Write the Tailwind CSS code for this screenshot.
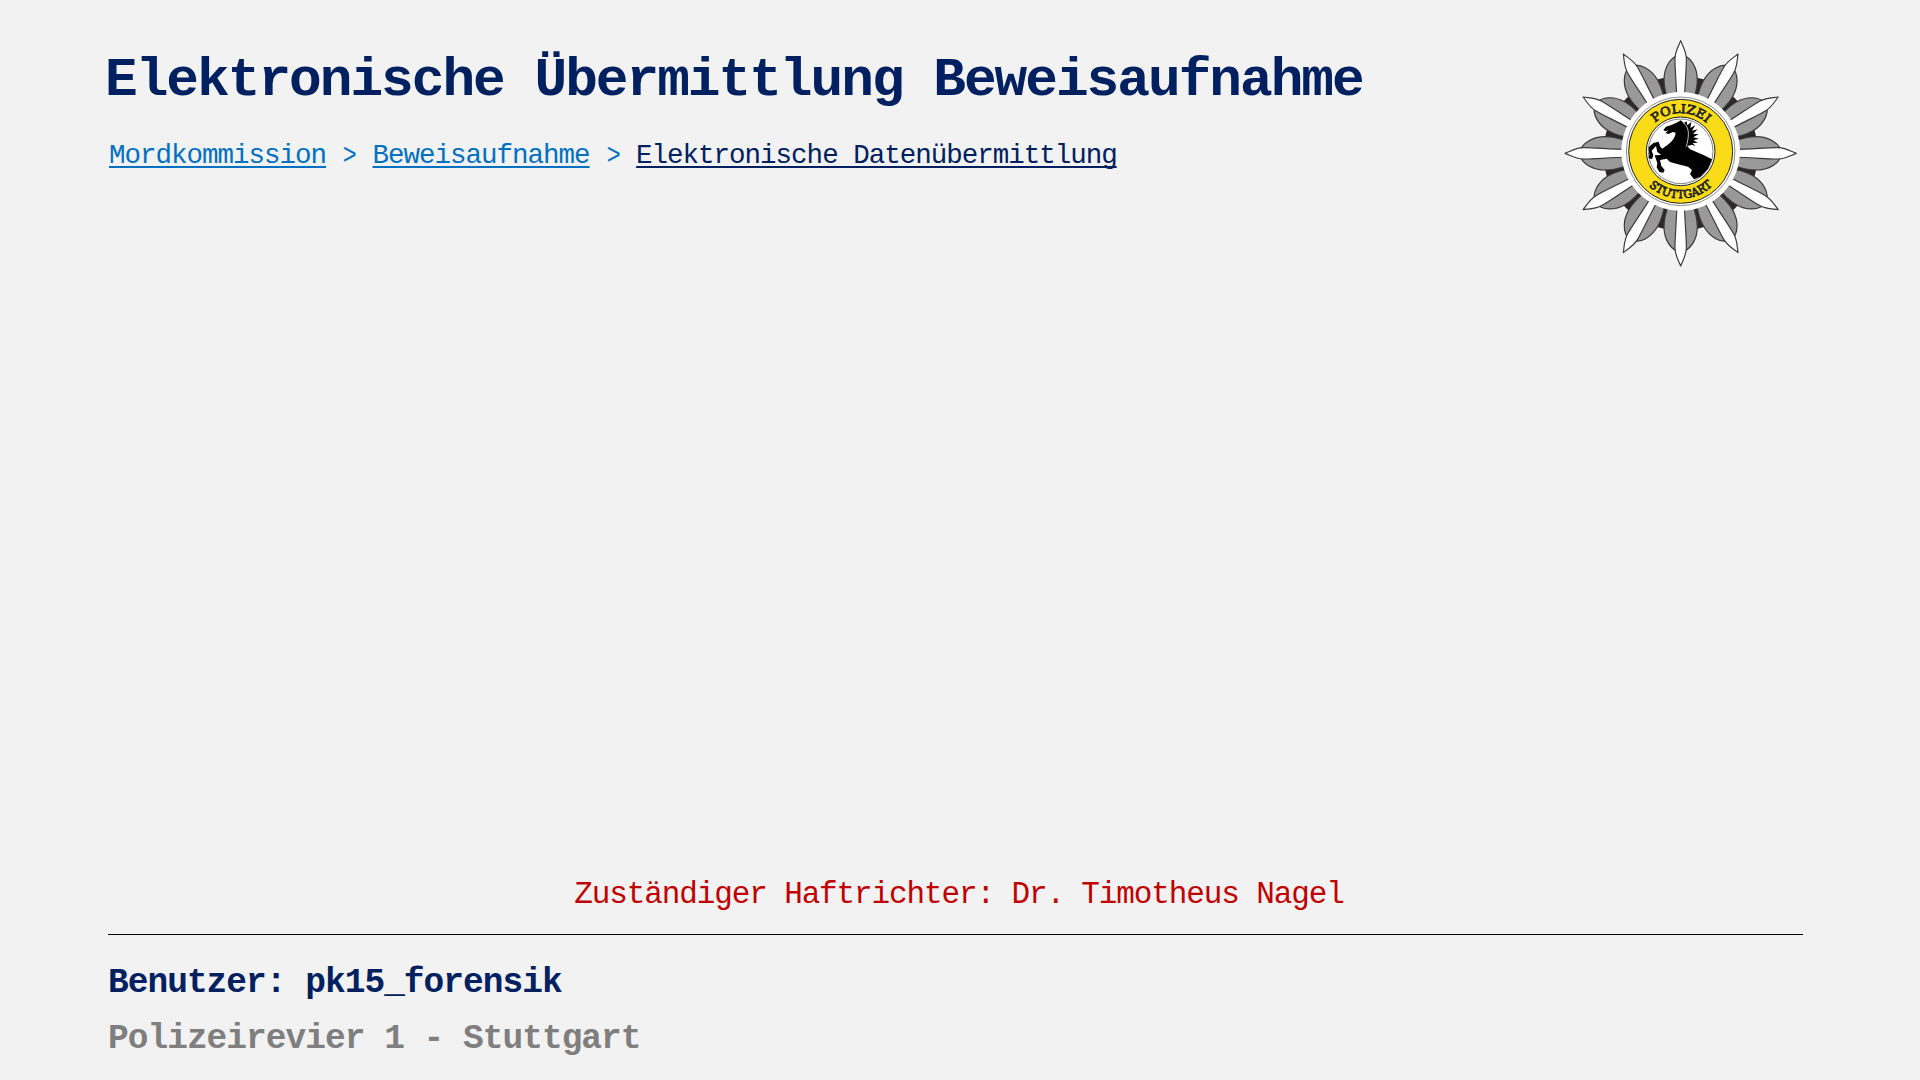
<!DOCTYPE html>
<html lang="de">
<head>
<meta charset="utf-8">
<title>Elektronische Übermittlung Beweisaufnahme</title>
<script src="https://cdn.jsdelivr.net/npm/@tailwindcss/browser@4"></script>
</head>
<body class="bg-[#f2f2f2]">
<div class="flex h-[1080px] w-[1920px] flex-col justify-between overflow-hidden bg-[#f2f2f2] font-['Liberation_Mono',monospace] text-[#002060]">
  <header class="flex justify-between pt-[30px] pr-[110px] pl-[105px]">
    <div class="flex flex-col whitespace-nowrap">
      <h1 class="mt-[17px] text-[54.5px] leading-[68px] font-bold tracking-[-2.03px]">Elektronische Übermittlung Beweisaufnahme</h1>
      <nav class="mt-[23px] ml-[4px] flex text-[27.5px] leading-[36px] tracking-[-1px] text-[#0070c0]">
        <a class="underline decoration-2 underline-offset-[3px] [text-decoration-skip-ink:none]">Mordkommission</a>
        <span class="inline-block w-[46.5px] scale-x-85 scale-y-110 text-center">&gt;</span>
        <a class="underline decoration-2 underline-offset-[3px] [text-decoration-skip-ink:none]">Beweisaufnahme</a>
        <span class="inline-block w-[46.5px] scale-x-85 scale-y-110 text-center">&gt;</span>
        <a class="text-[#002060] underline decoration-2 underline-offset-[3px] [text-decoration-skip-ink:none]">Elektronische Datenübermittlung</a>
      </nav>
    </div>
    <svg class="h-[246px] w-[260px]" viewBox="0 0 780 738">
      <defs>
        <g id="ray" stroke="#3a3839" stroke-width="3.5" stroke-linejoin="round">
          <path fill="#999" d="M0-297C-32-290-50-256-50-220C-50-198-44-175-34-150H34C44-175 50-198 50-220C50-256 32-290 0-297Z"/>
          <path fill="#fff" d="M0-338C-6-322-16-308-17-285C-18-262-13-215-11-150H11C13-215 18-262 17-285C16-308 6-322 0-338Z"/>
        </g>
        <path id="top" d="M277 364A115 115 0 0 1 507 364"/>
        <path id="bottom" d="M251 364A141 141 0 0 0 533 364"/>
      </defs>
      <circle cx="392" cy="370" r="232" fill="#2a2728"/>
      <g transform="translate(392 370)">
        <use href="#ray"/><use href="#ray" transform="rotate(30) scale(1 1.018)"/><use href="#ray" transform="rotate(60)"/>
        <use href="#ray" transform="rotate(90) scale(1 1.026)"/><use href="#ray" transform="rotate(120)"/><use href="#ray" transform="rotate(150) scale(1 1.018)"/>
        <use href="#ray" transform="rotate(180)"/><use href="#ray" transform="rotate(210) scale(1 1.018)"/><use href="#ray" transform="rotate(240)"/>
        <use href="#ray" transform="rotate(270) scale(1 1.026)"/><use href="#ray" transform="rotate(300)"/><use href="#ray" transform="rotate(330) scale(1 1.018)"/>
      </g>
      <circle cx="392" cy="364" r="178" fill="#fff"/>
      <circle cx="392" cy="364" r="163" fill="none" stroke="#555" stroke-width="2"/>
      <circle cx="392" cy="364" r="156" fill="#f9dc17" stroke="#222" stroke-width="3"/>
      <circle cx="392" cy="364" r="103" fill="#fff" stroke="#222" stroke-width="3"/>
      <circle cx="392" cy="364" r="97" fill="#fff" stroke="#444" stroke-width="2"/>
      <g class="font-['DejaVu_Serif',serif]" fill="#222" stroke="#222" stroke-width="2.2">
        <text font-size="37"><textPath href="#top" startOffset="96" textLength="170" lengthAdjust="spacingAndGlyphs">POLIZEI</textPath></text>
        <text font-size="34"><textPath href="#bottom" startOffset="117" textLength="210" lengthAdjust="spacingAndGlyphs">STUTTGART</textPath></text>
      </g>
      <path d="M392 271L384 276L366 284L348 290L340 300L346 304L356 301L346 309L356 312L368 306L377 308C376 326 360 340 345 350L337 356L331 350L326 335L310 339L296 352L298 374L296 384L306 388L310 376L305 362L318 348L322 366L334 375L314 376L318 388L322 400L320 412L328 426L340 428L344 420L334 408L330 390L350 386L360 396L390 404L414 410L426 420L420 432L432 448L452 440L474 416L486 388L462 376L420 358L412 348L426 344L436 348L428 339L444 338L430 331L447 326L430 322L446 312L429 312L443 298L426 302L436 286L421 294L424 276L412 286L410 274L402 279Z"/>
      <path d="M398 277C422 292 416 322 409 350" fill="none" stroke="#fff" stroke-width="2.2"/>
    </svg>
  </header>
  <footer class="flex flex-col px-[108px] whitespace-nowrap">
    <p class="pr-[2px] text-center text-[31px] leading-[40px] tracking-[-1.12px] text-[#c00000]">Zuständiger Haftrichter: Dr. Timotheus Nagel</p>
    <hr class="mt-[19px] mr-[9px] border-t border-black">
    <p class="mt-[25px] text-[34.5px] leading-[46px] font-bold tracking-[-0.98px]">Benutzer: pk15_forensik</p>
    <p class="mt-[10px] mb-[18px] text-[34.5px] leading-[46px] font-bold tracking-[-0.98px] text-[#7f7f7f]">Polizeirevier 1 - Stuttgart</p>
  </footer>
</div>
</body>
</html>
